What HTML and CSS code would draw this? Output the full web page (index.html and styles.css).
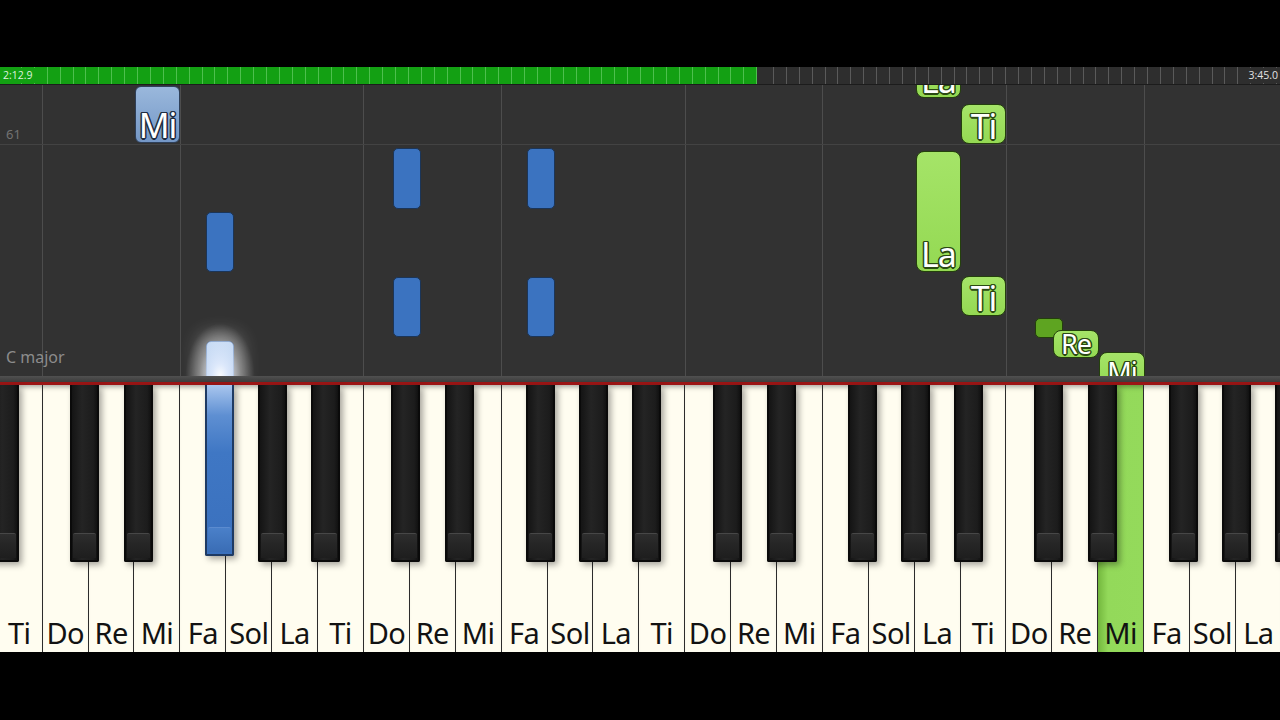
FILE: index.html
```html
<!DOCTYPE html>
<html>
<head>
<meta charset="utf-8">
<link rel="stylesheet" href="styles.css">
</head>
<body>
<div class="screen">
  <div class="letterbox-top"></div>
  <div class="progress">
    <div class="played"><span class="time">2:12.9</span></div>
    <div class="remaining"><span class="time end">3:45.0</span></div>
  </div>
  <div class="field">
    <div class="vline" style="left:42px"></div>
    <div class="vline" style="left:180px"></div>
    <div class="vline" style="left:363px"></div>
    <div class="vline" style="left:501px"></div>
    <div class="vline" style="left:685px"></div>
    <div class="vline" style="left:822px"></div>
    <div class="vline" style="left:1006px"></div>
    <div class="vline" style="left:1144px"></div>
    <div class="hline" style="top:59px"></div>
    <span class="row-num">61</span>
    <span class="key-sig">C major</span>

    <div class="note lh-white" style="left:135px;top:1px;width:45px;height:57px"><span>Mi</span></div>

    <div class="note lh-black" style="left:206px;top:127px;height:60px"></div>
    <div class="note lh-black" style="left:393px;top:63px;height:61px"></div>
    <div class="note lh-black" style="left:393px;top:192px;height:60px"></div>
    <div class="note lh-black" style="left:527px;top:63px;height:61px"></div>
    <div class="note lh-black" style="left:527px;top:192px;height:60px"></div>
    <div class="note lh-black playing" style="left:206px;top:256px;height:44px"></div>
    <div class="glow" style="left:185px;top:238px"></div>

    <div class="note rh-white" style="left:916px;top:-27px;width:45px;height:40px"><span>La</span></div>
    <div class="note rh-white" style="left:961px;top:19px;width:45px;height:40px"><span>Ti</span></div>
    <div class="note rh-white" style="left:916px;top:66px;width:45px;height:121px"><span>La</span></div>
    <div class="note rh-white" style="left:961px;top:191px;width:45px;height:40px"><span>Ti</span></div>
    <div class="note rh-black" style="left:1035px;top:233px;width:28px;height:20px"></div>
    <div class="note rh-white small" style="left:1053px;top:245px;width:46px;height:28px"><span>Re</span></div>
    <div class="note rh-white small" style="left:1099px;top:267px;width:46px;height:34px"><span>Mi</span></div>
  </div>
  <div class="kbar"></div>
  <div class="redline"></div>
  <div class="keys">
    <div class="whites">
      <div class="wk"><span>Ti</span></div>
      <div class="wk"><span>Do</span></div>
      <div class="wk"><span>Re</span></div>
      <div class="wk"><span>Mi</span></div>
      <div class="wk"><span>Fa</span></div>
      <div class="wk"><span>Sol</span></div>
      <div class="wk"><span>La</span></div>
      <div class="wk"><span>Ti</span></div>
      <div class="wk"><span>Do</span></div>
      <div class="wk"><span>Re</span></div>
      <div class="wk"><span>Mi</span></div>
      <div class="wk"><span>Fa</span></div>
      <div class="wk"><span>Sol</span></div>
      <div class="wk"><span>La</span></div>
      <div class="wk"><span>Ti</span></div>
      <div class="wk"><span>Do</span></div>
      <div class="wk"><span>Re</span></div>
      <div class="wk"><span>Mi</span></div>
      <div class="wk"><span>Fa</span></div>
      <div class="wk"><span>Sol</span></div>
      <div class="wk"><span>La</span></div>
      <div class="wk"><span>Ti</span></div>
      <div class="wk"><span>Do</span></div>
      <div class="wk"><span>Re</span></div>
      <div class="wk pressed-green"><span>Mi</span></div>
      <div class="wk"><span>Fa</span></div>
      <div class="wk"><span>Sol</span></div>
      <div class="wk"><span>La</span></div>
    </div>
    <div class="bk" style="left:-10.4px"></div>
    <div class="bk" style="left:70px"></div>
    <div class="bk" style="left:124px"></div>
    <div class="bk pressed-blue" style="left:205px"></div>
    <div class="bk" style="left:258px"></div>
    <div class="bk" style="left:311px"></div>
    <div class="bk" style="left:391.3px"></div>
    <div class="bk" style="left:445.3px"></div>
    <div class="bk" style="left:526.3px"></div>
    <div class="bk" style="left:579.3px"></div>
    <div class="bk" style="left:632.3px"></div>
    <div class="bk" style="left:712.6px"></div>
    <div class="bk" style="left:766.6px"></div>
    <div class="bk" style="left:847.6px"></div>
    <div class="bk" style="left:900.6px"></div>
    <div class="bk" style="left:953.6px"></div>
    <div class="bk" style="left:1033.9px"></div>
    <div class="bk" style="left:1087.9px"></div>
    <div class="bk" style="left:1168.9px"></div>
    <div class="bk" style="left:1221.9px"></div>
    <div class="bk" style="left:1274.9px"></div>
  </div>
  <div class="letterbox-bottom"></div>
</div>
</body>
</html>
```

FILE: styles.css
```css
html, body {
  margin: 0;
  padding: 0;
  background: #000;
}
.screen {
  width: 1280px;
  height: 720px;
  overflow: hidden;
  display: flex;
  flex-direction: column;
  background: #000;
  font-family: "Noto Sans", "Open Sans", sans-serif;
}
.letterbox-top {
  height: 67px;
  flex: none;
}
.progress {
  height: 18px;
  flex: none;
  display: flex;
  border-bottom: 1px solid #1c1c1c;
  box-sizing: border-box;
}
.played {
  width: 757px;
  background-color: #13a013;
  background-image: repeating-linear-gradient(to right, transparent 0, transparent 11.9px, rgba(150,230,150,0.45) 11.9px, rgba(150,230,150,0.45) 12.9px);
  background-position: 9px 0;
  display: flex;
  align-items: center;
}
.remaining {
  flex: 1;
  background-color: #2e2e2e;
  background-image: repeating-linear-gradient(to right, transparent 0, transparent 11.9px, #5a5a5a 11.9px, #5a5a5a 12.9px);
  background-position: 4px 0;
  display: flex;
  align-items: center;
  justify-content: flex-end;
}
.time {
  font-family: "Open Sans", "Noto Sans", sans-serif;
  font-size: 10.5px;
  color: #dff2df;
  padding: 0 3px 0 3px;
  background: #13a013;
  line-height: 15px;
}
.time.end {
  color: #e2e2e2;
  background: #2e2e2e;
  padding: 0 2px 0 3px;
}
.field {
  height: 291px;
  flex: none;
  position: relative;
  overflow: hidden;
  background: #323232;
}
.vline {
  position: absolute;
  top: 0;
  bottom: 0;
  width: 1px;
  background: #4d4d4d;
}
.hline {
  position: absolute;
  left: 0;
  right: 0;
  height: 1px;
  background: #434343;
}
.row-num {
  position: absolute;
  left: 6px;
  top: 40px;
  font-size: 13px;
  line-height: 18px;
  color: #727272;
}
.key-sig {
  position: absolute;
  left: 6px;
  top: 261px;
  font-size: 16px;
  line-height: 22px;
  color: #8c8c8c;
}
.note {
  position: absolute;
  box-sizing: border-box;
  width: 28px;
  border-radius: 6px;
  display: flex;
  align-items: flex-end;
  justify-content: center;
}
.note span {
  font-size: 34px;
  line-height: 36px;
  letter-spacing: -1px;
  color: #fff;
  margin-bottom: -1px;
}
.note.small span {
  font-size: 27px;
  line-height: 28px;
  margin-bottom: -1px;
}
.lh-white {
  background: linear-gradient(#9ab8dc, #7497c6);
  border: 1.5px solid #2e3f58;
}
.lh-white span {
  text-shadow: 1.5px 0 #1f2c40, -1.5px 0 #1f2c40, 0 1.5px #1f2c40, 0 -1.5px #1f2c40, 1px 1px #1f2c40, -1px -1px #1f2c40, 1px -1px #1f2c40, -1px 1px #1f2c40;
}
.lh-black {
  background: #3b73c0;
  border: 1px solid #1b3558;
  border-radius: 5px;
}
.lh-black.playing {
  background: linear-gradient(#b9d2f2, #8fb3e6);
  border-color: #6d8fc0;
  box-shadow: 0 0 18px 8px rgba(255,255,255,0.3);
}
.glow {
  position: absolute;
  width: 70px;
  height: 64px;
  background: radial-gradient(ellipse at 50% 82%, rgba(255,255,255,0.95) 0, rgba(235,242,255,0.8) 16%, rgba(255,255,255,0.3) 42%, rgba(255,255,255,0) 70%);
}
.rh-white {
  background: linear-gradient(#a5e468, #94d953);
  border: 1.5px solid #24410c;
  border-radius: 8px;
}
.rh-white span {
  text-shadow: 1.5px 0 #2b4a12, -1.5px 0 #2b4a12, 0 1.5px #2b4a12, 0 -1.5px #2b4a12, 1px 1px #2b4a12, -1px -1px #2b4a12, 1px -1px #2b4a12, -1px 1px #2b4a12;
}
.rh-black {
  background: #5ea421;
  border: 1px solid #233f0b;
  border-radius: 5px;
}
.kbar {
  height: 6px;
  flex: none;
  background: linear-gradient(#505050, #3c3c3c);
}
.redline {
  height: 3px;
  flex: none;
  background: #9b1515;
}
.keys {
  height: 267px;
  flex: none;
  position: relative;
}
.whites {
  display: flex;
  height: 100%;
  margin-left: -3.2px;
}
.wk {
  flex: none;
  width: 45.9px;
  box-sizing: border-box;
  height: 100%;
  background: #fffdf0;
  border-right: 1.2px solid #2c2c2c;
  box-shadow: inset 0 6px 5px -4px rgba(0,0,0,0.35);
  display: flex;
  align-items: flex-end;
  justify-content: center;
}
.wk span {
  font-size: 29px;
  line-height: 29px;
  letter-spacing: -0.6px;
  color: #121212;
  margin-bottom: 5px;
}
.wk.pressed-green {
  background: linear-gradient(to right, #74b83e 0, #93d95a 10px, #94da5b 100%);
}
.bk {
  position: absolute;
  top: 0;
  width: 29px;
  height: 177px;
  box-sizing: border-box;
  border: 2px solid #0a0a0a;
  border-top: 0;
  border-radius: 0 0 2px 2px;
  background: linear-gradient(to right, #141414, #242424 40%, #1c1c1c 85%, #111);
  box-shadow: 3px 3px 6px rgba(0,0,0,0.35);
}
.bk::after {
  content: "";
  position: absolute;
  left: 1px;
  right: 1px;
  bottom: 2px;
  height: 24px;
  border-top: 1px solid #474747;
  background: linear-gradient(#2e2e2e, #262626 40%, #1e1e1e);
  border-radius: 2px 2px 0 0;
}
.bk.pressed-blue {
  height: 171px;
  border-color: #1e3a63;
  background: linear-gradient(#a9c6ee 0, #5e8fd2 18%, #3f77c4 40%, #3a70bd 100%);
}
.bk.pressed-blue::after {
  background: linear-gradient(#4a80c9, #3a6db5);
  border-top-color: #5b8bcf;
}
.letterbox-bottom {
  flex: 1;
  background: #000;
}
```
